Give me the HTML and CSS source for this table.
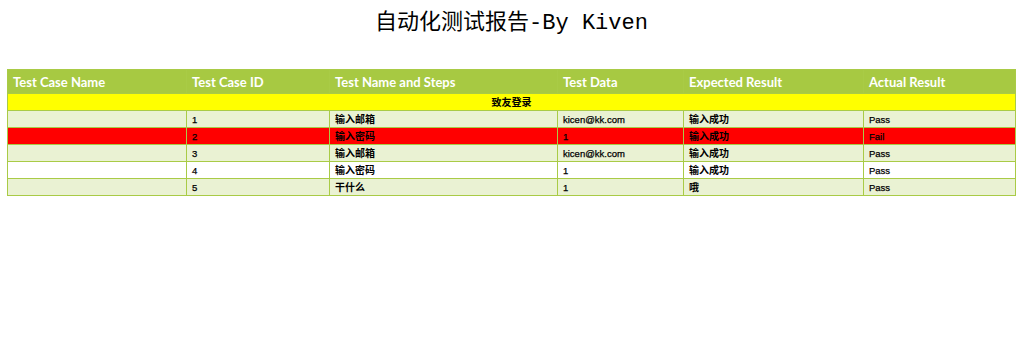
FILE: index.html
```html
<!DOCTYPE html>
<html lang="zh">
<head>
<meta charset="utf-8">
<title>自动化测试报告</title>
<link rel="stylesheet" href="styles.css">
</head>
<body>
<h2 class="title">自动化测试报告-By Kiven</h2>
<table class="report">
  <colgroup>
    <col class="c1"><col class="c2"><col class="c3"><col class="c4"><col class="c5"><col class="c6">
  </colgroup>
  <thead>
    <tr>
      <th>Test Case Name</th>
      <th>Test Case ID</th>
      <th>Test Name and Steps</th>
      <th>Test Data</th>
      <th>Expected Result</th>
      <th>Actual Result</th>
    </tr>
  </thead>
  <tbody>
    <tr class="group"><td colspan="6">致友登录</td></tr>
    <tr class="alt"><td></td><td>1</td><td class="cn">输入邮箱</td><td>kicen@kk.com</td><td class="cn">输入成功</td><td>Pass</td></tr>
    <tr class="fail"><td></td><td>2</td><td class="cn">输入密码</td><td>1</td><td class="cn">输入成功</td><td>Fail</td></tr>
    <tr class="alt"><td></td><td>3</td><td class="cn">输入邮箱</td><td>kicen@kk.com</td><td class="cn">输入成功</td><td>Pass</td></tr>
    <tr class="plain"><td></td><td>4</td><td class="cn">输入密码</td><td>1</td><td class="cn">输入成功</td><td>Pass</td></tr>
    <tr class="alt"><td></td><td>5</td><td class="cn">干什么</td><td>1</td><td class="cn">哦</td><td>Pass</td></tr>
  </tbody>
</table>
</body>
</html>
```
FILE: styles.css
```css
body {
  margin: 8px 8px 8px 7px;
  background: #fff;
  font-family: "Liberation Sans", "Noto Sans CJK SC", sans-serif;
}
.title {
  margin: 0 0 29px 0;
  height: 32px;
  line-height: 32px;
  text-align: center;
  font-family: "Liberation Mono", "Noto Sans CJK SC", monospace;
  font-weight: normal;
  font-size: 22px;
  color: #000;
}
.report {
  width: 100%;
  border-collapse: collapse;
  table-layout: fixed;
  font-family: "Liberation Sans", "Noto Sans CJK SC", sans-serif;
}
.c1 { width: 179px; }
.c2 { width: 143px; }
.c3 { width: 228px; }
.c4 { width: 126px; }
.c5 { width: 180px; }
.c6 { width: auto; }
.report th,
.report td {
  border: 1px solid #a9cb46;
  text-align: left;
  overflow: hidden;
  white-space: nowrap;
}
.report th {
  background: #a7c942;
  color: #fff;
  font-family: "Lato", "Noto Sans CJK SC", sans-serif;
  font-weight: bold;
  font-size: 13px;
  line-height: 14px;
  padding: 5px 5px 4px 5px;
  height: 14px;
}
.report td {
  font-size: 9.5px;
  line-height: 11px;
  height: 11px;
  padding: 3px 5px 2px 5px;
  color: #000;
  -webkit-text-stroke: 0.25px #000;
}
.report td.cn {
  font-weight: bold;
  font-size: 10px;
  -webkit-text-stroke: 0;
}
.group td {
  background: #ffff00;
  text-align: center;
  font-weight: bold;
  font-size: 10px;
  -webkit-text-stroke: 0;
}
.alt td { background: #eaf2d3; }
.fail td { background: #ff0000; }
.plain td { background: #fff; }
```
